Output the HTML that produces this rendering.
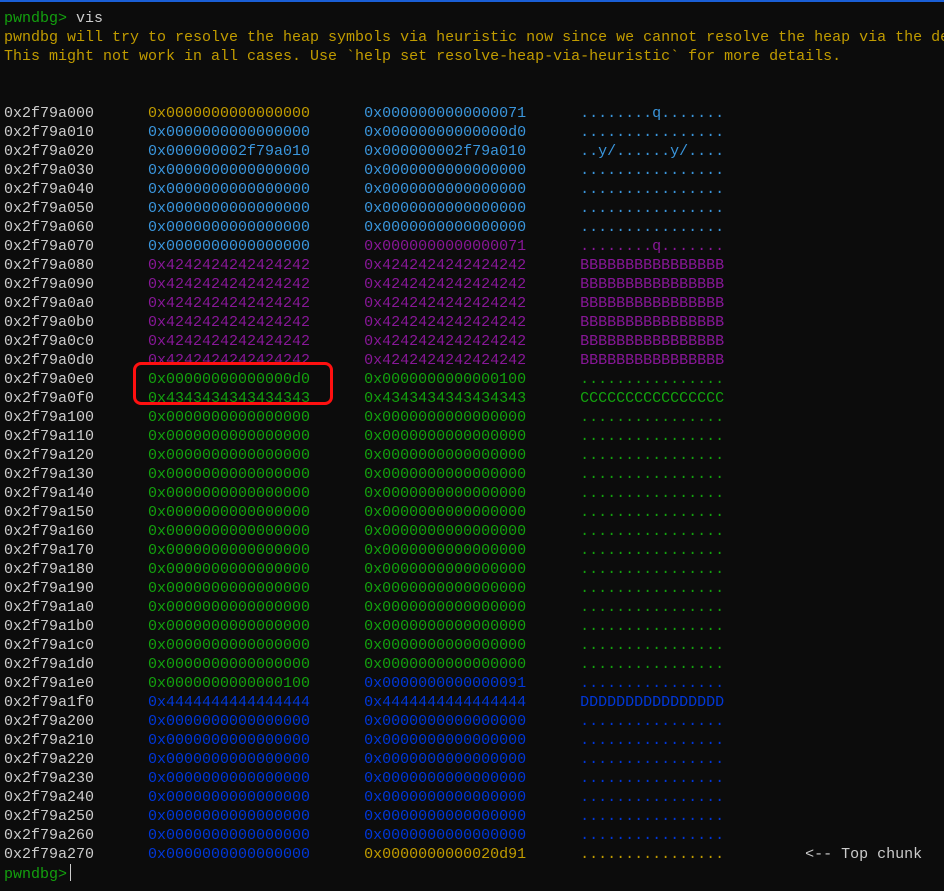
<!DOCTYPE html>
<html><head><meta charset="utf-8"><style>
html,body{margin:0;padding:0;background:#0c0c0c;width:944px;height:891px;overflow:hidden}
body{border-top:2px solid #1a5fd6;box-sizing:border-box;position:relative}
pre{margin:0;padding:7px 0 0 4px;font-family:"Liberation Mono",monospace;font-size:15px;line-height:19px;color:#cccccc;white-space:pre;overflow:hidden;width:940px}
.y{color:#c19c00}.b{color:#3a96dd}.p{color:#881798}.g{color:#13a10e}.d{color:#0037da}.w{color:#cccccc}
.box{position:absolute;left:133px;top:360px;width:194px;height:37px;border:3px solid #ff1010;border-radius:8px}
.cur{display:inline-block;width:1px;height:17px;background:#cccccc;vertical-align:-3px;margin-left:3px}
</style></head><body><pre><span class="g">pwndbg&gt;</span> vis
<span class="y">pwndbg will try to resolve the heap symbols via heuristic now since we cannot resolve the heap via the de
This might not work in all cases. Use `help set resolve-heap-via-heuristic` for more details.</span>


0x2f79a000      <span class="y">0x0000000000000000</span>      <span class="b">0x0000000000000071</span>      <span class="b">........q.......</span>
0x2f79a010      <span class="b">0x0000000000000000</span>      <span class="b">0x00000000000000d0</span>      <span class="b">................</span>
0x2f79a020      <span class="b">0x000000002f79a010</span>      <span class="b">0x000000002f79a010</span>      <span class="b">..y/......y/....</span>
0x2f79a030      <span class="b">0x0000000000000000</span>      <span class="b">0x0000000000000000</span>      <span class="b">................</span>
0x2f79a040      <span class="b">0x0000000000000000</span>      <span class="b">0x0000000000000000</span>      <span class="b">................</span>
0x2f79a050      <span class="b">0x0000000000000000</span>      <span class="b">0x0000000000000000</span>      <span class="b">................</span>
0x2f79a060      <span class="b">0x0000000000000000</span>      <span class="b">0x0000000000000000</span>      <span class="b">................</span>
0x2f79a070      <span class="b">0x0000000000000000</span>      <span class="p">0x0000000000000071</span>      <span class="p">........q.......</span>
0x2f79a080      <span class="p">0x4242424242424242</span>      <span class="p">0x4242424242424242</span>      <span class="p">BBBBBBBBBBBBBBBB</span>
0x2f79a090      <span class="p">0x4242424242424242</span>      <span class="p">0x4242424242424242</span>      <span class="p">BBBBBBBBBBBBBBBB</span>
0x2f79a0a0      <span class="p">0x4242424242424242</span>      <span class="p">0x4242424242424242</span>      <span class="p">BBBBBBBBBBBBBBBB</span>
0x2f79a0b0      <span class="p">0x4242424242424242</span>      <span class="p">0x4242424242424242</span>      <span class="p">BBBBBBBBBBBBBBBB</span>
0x2f79a0c0      <span class="p">0x4242424242424242</span>      <span class="p">0x4242424242424242</span>      <span class="p">BBBBBBBBBBBBBBBB</span>
0x2f79a0d0      <span class="p">0x4242424242424242</span>      <span class="p">0x4242424242424242</span>      <span class="p">BBBBBBBBBBBBBBBB</span>
0x2f79a0e0      <span class="g">0x00000000000000d0</span>      <span class="g">0x0000000000000100</span>      <span class="g">................</span>
0x2f79a0f0      <span class="g">0x4343434343434343</span>      <span class="g">0x4343434343434343</span>      <span class="g">CCCCCCCCCCCCCCCC</span>
0x2f79a100      <span class="g">0x0000000000000000</span>      <span class="g">0x0000000000000000</span>      <span class="g">................</span>
0x2f79a110      <span class="g">0x0000000000000000</span>      <span class="g">0x0000000000000000</span>      <span class="g">................</span>
0x2f79a120      <span class="g">0x0000000000000000</span>      <span class="g">0x0000000000000000</span>      <span class="g">................</span>
0x2f79a130      <span class="g">0x0000000000000000</span>      <span class="g">0x0000000000000000</span>      <span class="g">................</span>
0x2f79a140      <span class="g">0x0000000000000000</span>      <span class="g">0x0000000000000000</span>      <span class="g">................</span>
0x2f79a150      <span class="g">0x0000000000000000</span>      <span class="g">0x0000000000000000</span>      <span class="g">................</span>
0x2f79a160      <span class="g">0x0000000000000000</span>      <span class="g">0x0000000000000000</span>      <span class="g">................</span>
0x2f79a170      <span class="g">0x0000000000000000</span>      <span class="g">0x0000000000000000</span>      <span class="g">................</span>
0x2f79a180      <span class="g">0x0000000000000000</span>      <span class="g">0x0000000000000000</span>      <span class="g">................</span>
0x2f79a190      <span class="g">0x0000000000000000</span>      <span class="g">0x0000000000000000</span>      <span class="g">................</span>
0x2f79a1a0      <span class="g">0x0000000000000000</span>      <span class="g">0x0000000000000000</span>      <span class="g">................</span>
0x2f79a1b0      <span class="g">0x0000000000000000</span>      <span class="g">0x0000000000000000</span>      <span class="g">................</span>
0x2f79a1c0      <span class="g">0x0000000000000000</span>      <span class="g">0x0000000000000000</span>      <span class="g">................</span>
0x2f79a1d0      <span class="g">0x0000000000000000</span>      <span class="g">0x0000000000000000</span>      <span class="g">................</span>
0x2f79a1e0      <span class="g">0x0000000000000100</span>      <span class="d">0x0000000000000091</span>      <span class="d">................</span>
0x2f79a1f0      <span class="d">0x4444444444444444</span>      <span class="d">0x4444444444444444</span>      <span class="d">DDDDDDDDDDDDDDDD</span>
0x2f79a200      <span class="d">0x0000000000000000</span>      <span class="d">0x0000000000000000</span>      <span class="d">................</span>
0x2f79a210      <span class="d">0x0000000000000000</span>      <span class="d">0x0000000000000000</span>      <span class="d">................</span>
0x2f79a220      <span class="d">0x0000000000000000</span>      <span class="d">0x0000000000000000</span>      <span class="d">................</span>
0x2f79a230      <span class="d">0x0000000000000000</span>      <span class="d">0x0000000000000000</span>      <span class="d">................</span>
0x2f79a240      <span class="d">0x0000000000000000</span>      <span class="d">0x0000000000000000</span>      <span class="d">................</span>
0x2f79a250      <span class="d">0x0000000000000000</span>      <span class="d">0x0000000000000000</span>      <span class="d">................</span>
0x2f79a260      <span class="d">0x0000000000000000</span>      <span class="d">0x0000000000000000</span>      <span class="d">................</span>
0x2f79a270      <span class="d">0x0000000000000000</span>      <span class="y">0x0000000000020d91</span>      <span class="y">................</span>         &lt;-- Top chunk
<span class="g">pwndbg&gt;</span><span class="cur"></span></pre>
<div class="box"></div>
</body></html>
